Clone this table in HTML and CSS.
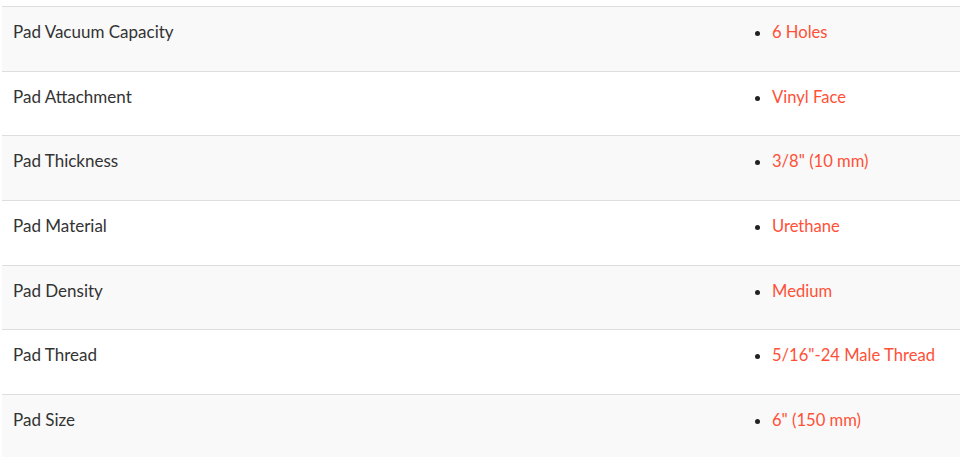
FILE: index.html
```html
<!DOCTYPE html>
<html>
<head>
<meta charset="utf-8">
<link rel="stylesheet" href="styles.css">
</head>
<body>
<div class="specs">
  <div class="row alt"><div class="label">Pad Vacuum Capacity</div><div class="value"><ul><li>6 Holes</li></ul></div></div>
  <div class="row"><div class="label">Pad Attachment</div><div class="value"><ul><li>Vinyl Face</li></ul></div></div>
  <div class="row alt"><div class="label">Pad Thickness</div><div class="value"><ul><li>3/8" (10 mm)</li></ul></div></div>
  <div class="row"><div class="label">Pad Material</div><div class="value"><ul><li>Urethane</li></ul></div></div>
  <div class="row alt"><div class="label">Pad Density</div><div class="value"><ul><li>Medium</li></ul></div></div>
  <div class="row"><div class="label">Pad Thread</div><div class="value"><ul><li>5/16"-24 Male Thread</li></ul></div></div>
  <div class="row alt"><div class="label">Pad Size</div><div class="value"><ul><li>6" (150 mm)</li></ul></div></div>
</div>
</body>
</html>
```
FILE: styles.css
```css
html, body {
  margin: 0;
  padding: 0;
  background: #fff;
}
body {
  padding: 6px 0 0 2px;
  font-family: Lato, "Liberation Sans", sans-serif;
  font-size: 17px;
  line-height: 24px;
  color: #333;
}
.specs {
  width: 970px;
  border-top: 1px solid #dedede;
}
.row {
  display: grid;
  grid-template-columns: 738px 1fr;
  border-bottom: 1px solid #dedede;
  background: #fff;
}
.row.alt {
  background: #f9f9f9;
}
.label {
  padding: 13px 11px 26.67px;
}
.value {
  padding: 13px 11px 0 12px;
}
.value ul {
  margin: 0;
  padding-left: 20px;
}
.value li {
  color: #ff5037;
  font-size: 16.6px;
}
.value li::marker {
  color: #222;
}
```
